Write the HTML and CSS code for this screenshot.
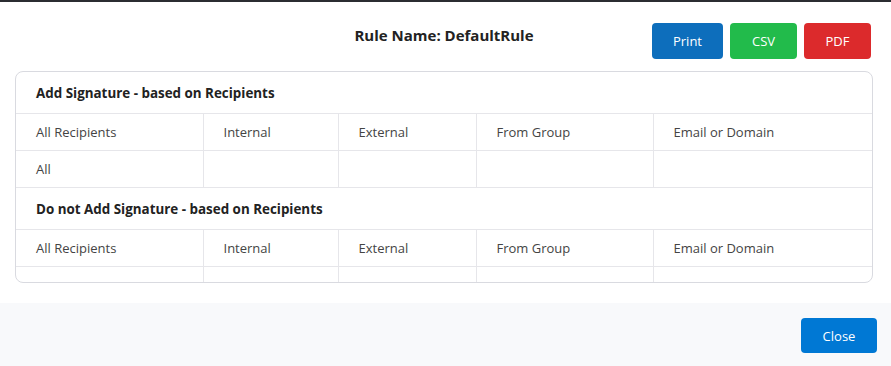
FILE: index.html
```html
<!DOCTYPE html>
<html lang="en">
<head>
    <meta charset="UTF-8">
    <meta name="viewport" content="width=device-width, initial-scale=1.0">
    <title>Rule Details</title>
    <link rel="stylesheet" href="styles.css">
</head>
<body>
    <div class="backdrop-edge"></div>

    <div class="modal-body">
        <div class="modal-header">
            <div></div>
            <h2 class="rule-title">Rule Name: DefaultRule</h2>
            <div class="export-buttons">
                <button class="btn btn-print">Print</button>
                <button class="btn btn-csv">CSV</button>
                <button class="btn btn-pdf">PDF</button>
            </div>
        </div>

        <div class="rule-card">
            <table class="rule-table">
                <colgroup>
                    <col class="col-all">
                    <col class="col-internal">
                    <col class="col-external">
                    <col class="col-group">
                    <col>
                </colgroup>
                <tr class="section-row">
                    <td colspan="5">Add Signature - based on Recipients</td>
                </tr>
                <tr>
                    <td>All Recipients</td>
                    <td>Internal</td>
                    <td>External</td>
                    <td>From Group</td>
                    <td>Email or Domain</td>
                </tr>
                <tr>
                    <td>All</td>
                    <td></td>
                    <td></td>
                    <td></td>
                    <td></td>
                </tr>
                <tr class="section-row">
                    <td colspan="5">Do not Add Signature - based on Recipients</td>
                </tr>
                <tr>
                    <td>All Recipients</td>
                    <td>Internal</td>
                    <td>External</td>
                    <td>From Group</td>
                    <td>Email or Domain</td>
                </tr>
                <tr class="empty-row">
                    <td></td>
                    <td></td>
                    <td></td>
                    <td></td>
                    <td></td>
                </tr>
            </table>
        </div>
    </div>

    <div class="modal-footer">
        <button class="btn btn-close">Close</button>
    </div>
</body>
</html>
```

FILE: styles.css
```css
body {
    font-family: "Open Sans", Arial, sans-serif;
    margin: 0;
    background-color: white;
    color: #333;
}

.backdrop-edge {
    height: 2px;
    background-color: #2b2d31;
}

.modal-body {
    padding: 0 18px 20px 15px;
}

.modal-header {
    display: grid;
    grid-template-columns: 1fr auto 1fr;
    padding-top: 21px;
    margin-bottom: 12px;
}

.rule-title {
    margin: 2px 0 0;
    font-size: 15px;
    line-height: 20px;
    font-weight: 700;
    color: #222;
    align-self: start;
}

.export-buttons {
    display: flex;
    justify-content: flex-end;
    gap: 7px;
    padding-right: 2px;
}

.btn {
    font-family: inherit;
    font-size: 13px;
    color: white;
    border: none;
    border-radius: 4px;
    height: 36px;
    cursor: pointer;
}

.btn-print {
    background-color: #0d6ebc;
    width: 71px;
}

.btn-csv {
    background-color: #22bb4b;
    width: 67px;
}

.btn-pdf {
    background-color: #dc2a2c;
    width: 67px;
}

.rule-card {
    border: 1px solid #d9dae0;
    border-radius: 8px;
    overflow: hidden;
}

.rule-table {
    width: 100%;
    border-collapse: collapse;
    table-layout: fixed;
    font-size: 13px;
}

.col-all {
    width: 187px;
}

.col-internal {
    width: 135px;
}

.col-external {
    width: 138px;
}

.col-group {
    width: 177px;
}

.rule-table td {
    padding: 8px 20px;
    line-height: 20px;
    color: #444;
    border-top: 1px solid #e6e6ea;
    border-left: 1px solid #e6e6ea;
    white-space: nowrap;
}

.rule-table tr:first-child td {
    border-top: none;
}

.rule-table td:first-child {
    border-left: none;
}

.section-row td {
    height: 41px;
    padding-top: 0;
    padding-bottom: 0;
    font-size: 13.4px;
    font-weight: 700;
    color: #222;
}

.empty-row td {
    height: 15px;
    padding: 0;
}

.modal-footer {
    background-color: #f8f9fb;
    display: flex;
    justify-content: flex-end;
    padding: 15px 14px 13px;
}

.btn-close {
    background-color: #0078d4;
    width: 76px;
    height: 35px;
}
```
